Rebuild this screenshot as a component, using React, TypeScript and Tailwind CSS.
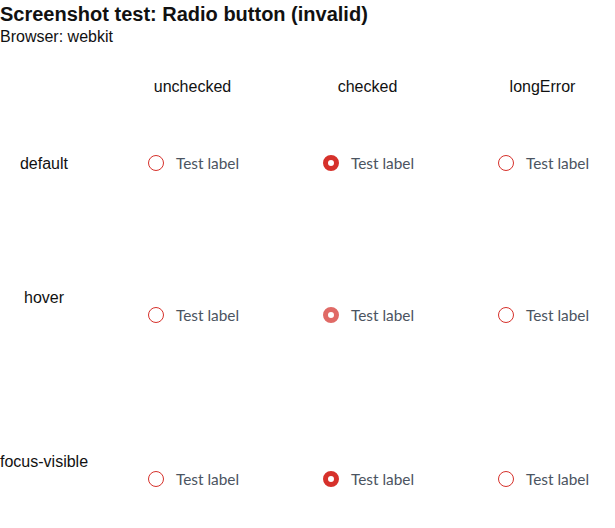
import React from 'react';

type RadioState = 'default' | 'hover' | 'focus';

function Radio({ checked, state }: { checked: boolean; state: RadioState }) {
  const ring = checked
    ? state === 'hover'
      ? 'border-[5px] border-[#e06a66]'
      : 'border-[5px] border-[#d6312b]'
    : 'border border-[#d6312b]';
  return (
    <label className="flex items-center gap-3">
      <span className={`box-border block h-4 w-4 shrink-0 rounded-full bg-white ${ring}`} />
      <span className="text-[15.4px] leading-5 text-[#4b5461]" style={{ fontFamily: 'Lato, "Open Sans", sans-serif' }}>
        Test label
      </span>
    </label>
  );
}

const columns = ['unchecked', 'checked', 'longError'];

const rows: { name: string; state: RadioState; height: string; shift: string }[] = [
  { name: 'default', state: 'default', height: 'h-[118px]', shift: '' },
  { name: 'hover', state: 'hover', height: 'h-[150px]', shift: 'pt-[36px]' },
  { name: 'focus-visible', state: 'focus', height: 'h-[178px]', shift: 'pt-[36px]' },
];

export default function App() {
  return (
    <div className="w-[615px] overflow-hidden bg-white text-[#111]" style={{ fontFamily: '"Liberation Sans", Arial, sans-serif' }}>
      <h1 className="text-[20px] font-bold leading-[28px]">Screenshot test: Radio button (invalid)</h1>
      <p className="text-[16px] leading-[18px]">Browser: webkit</p>

      <div className="mt-[24px] w-[630px]">
        <div className="grid h-[34px] grid-cols-[105px_175px_175px_175px] items-center text-[16px]">
          <div />
          {columns.map((c) => (
            <div key={c} className="text-center">{c}</div>
          ))}
        </div>

        {rows.map((r) => (
          <div key={r.name} className={`grid grid-cols-[105px_175px_175px_175px] items-center ${r.height}`}>
            <div className="whitespace-nowrap pr-[17px] pt-[2px] text-center text-[16px]">{r.name}</div>
            {columns.map((c) => (
              <div key={c} className={`flex justify-center pl-[2px] ${r.shift}`}>
                <Radio checked={c === 'checked'} state={r.state} />
              </div>
            ))}
          </div>
        ))}
      </div>
    </div>
  );
}
